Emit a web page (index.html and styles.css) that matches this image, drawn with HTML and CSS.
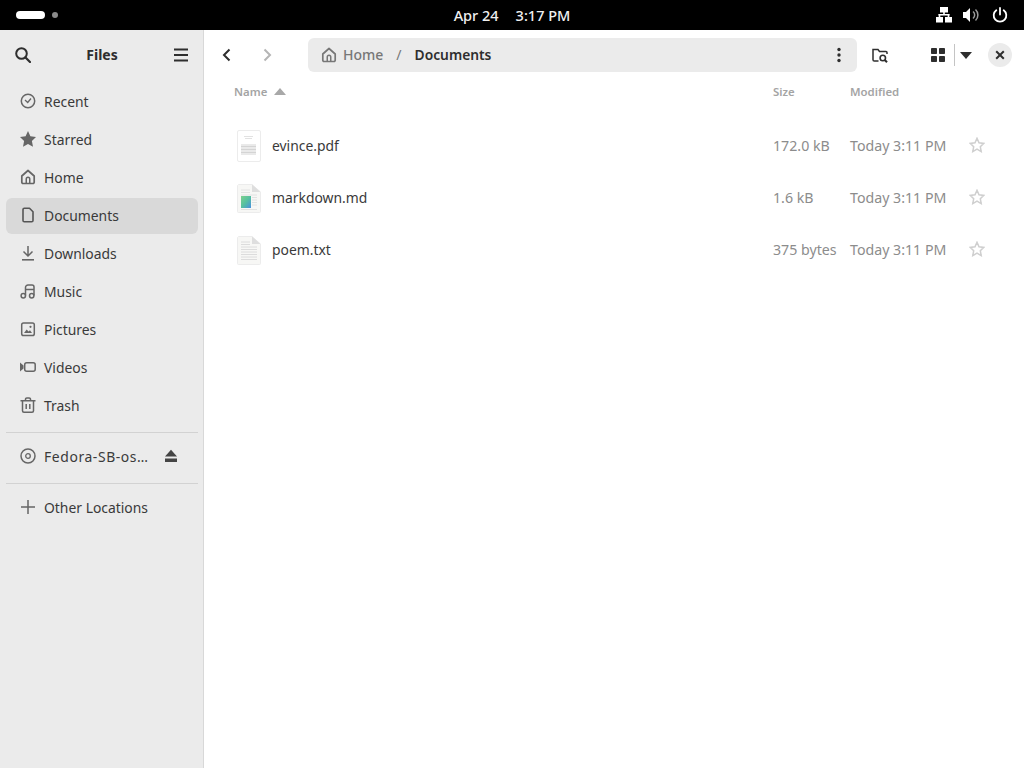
FILE: index.html
```html
<!DOCTYPE html>
<html lang="en">
<head>
<meta charset="utf-8">
<title>Files</title>
<link rel="stylesheet" href="styles.css">
</head>
<body>
<header class="topbar">
  <div class="activities"><span class="pill"></span><span class="dot"></span></div>
  <div class="clock"><span>Apr 24</span><span>3:17 PM</span></div>
  <div class="tray">
    <svg class="tray-icon" viewBox="0 0 16 16"><g fill="#fff"><rect x="4" y="0" width="8" height="5.500"/><rect x="0" y="10" width="7" height="5.500"/><rect x="9" y="10" width="7" height="5.500"/><rect x="7.200" y="5" width="1.600" height="3"/><rect x="2.500" y="7" width="11" height="1.500"/><rect x="2.700" y="7" width="1.600" height="3.500"/><rect x="11.700" y="7" width="1.600" height="3.500"/></g></svg>
    <svg class="tray-icon" viewBox="0 0 16 16"><path fill="#fff" d="M0 5h3l4-4v14l-4-4H0z"/><path fill="none" stroke="#9a9a9a" stroke-width="1.500" d="M10 4.500a4.500 4.500 0 0 1 0 7M12.500 2.500a7.500 7.500 0 0 1 0 11"/></svg>
    <svg class="tray-icon power" viewBox="0 0 16 16"><path fill="none" stroke="#fff" stroke-width="1.800" stroke-linecap="round" d="M8 1v6.500M4.300 3.300a6.300 6.300 0 1 0 7.400 0"/></svg>
  </div>
</header>
<div class="window">
  <aside class="sidebar">
    <div class="side-head">
      <svg class="icon dark" viewBox="0 0 16 16"><circle cx="6.500" cy="6.500" r="5.300" fill="none" stroke="#2e2e2e" stroke-width="2"/><path d="M10.500 10.500 15 15" stroke="#2e2e2e" stroke-width="2.200" stroke-linecap="round"/></svg>
      <span class="side-title">Files</span>
      <svg class="icon dark" viewBox="0 0 16 16"><path d="M1 2.500h14M1 8h14M1 13.500h14" stroke="#2e2e2e" stroke-width="2"/></svg>
    </div>
    <nav class="places">
      <a class="place"><svg class="icon" viewBox="0 0 16 16"><circle cx="8" cy="8" r="6.700" fill="none" stroke="#666" stroke-width="1.500"/><path d="M5 7 7.700 9.500 11 5.500" fill="none" stroke="#666" stroke-width="1.300"/></svg><span>Recent</span></a>
      <a class="place"><svg class="icon" viewBox="0 0 16 16"><path fill="#666" d="M8 0l2.400 5.300 5.600.7-4.100 3.900 1.100 5.800L8 12.900l-5 2.800 1.100-5.800L0 6l5.600-.7z"/></svg><span>Starred</span></a>
      <a class="place"><svg class="icon" viewBox="0 0 16 16"><path fill="none" stroke="#666" stroke-width="1.700" stroke-linejoin="round" d="M1.800 7 8 1.500 14.200 7v6.200a1.300 1.300 0 0 1-1.300 1.300H3.100a1.300 1.300 0 0 1-1.300-1.300z"/><path fill="#666" d="M5.500 14.500V10a2.500 2.500 0 0 1 5 0v4.500H9V10a1 1 0 0 0-2 0v4.500z"/></svg><span>Home</span></a>
      <a class="place selected"><svg class="icon" viewBox="0 0 16 16"><path fill="none" stroke="#555" stroke-width="1.600" stroke-linejoin="round" d="M3 2.500A1.300 1.300 0 0 1 4.300 1.200H9.500L13 4.700v8.800a1.300 1.300 0 0 1-1.300 1.300H4.300A1.300 1.300 0 0 1 3 13.500z"/></svg><span>Documents</span></a>
      <a class="place"><svg class="icon" viewBox="0 0 16 16"><path fill="none" stroke="#666" stroke-width="1.500" d="M8 1v9.500M3.500 6.500 8 11l4.500-4.500"/><path stroke="#666" stroke-width="1.600" d="M2 14.800h12"/></svg><span>Downloads</span></a>
      <a class="place"><svg class="icon" viewBox="0 0 16 16"><circle cx="3.300" cy="12.700" r="2.200" fill="none" stroke="#666" stroke-width="1.500"/><circle cx="11.700" cy="12.700" r="2.200" fill="none" stroke="#666" stroke-width="1.500"/><path fill="none" stroke="#666" stroke-width="1.500" d="M5.500 12.500V4.500a2.500 2.500 0 0 1 2.500-2.500h4a2 2 0 0 1 2 2v8.500M5.500 6.500H14"/></svg><span>Music</span></a>
      <a class="place"><svg class="icon" viewBox="0 0 16 16"><rect x="1.700" y="2" width="12.600" height="12.600" rx="1.800" fill="none" stroke="#666" stroke-width="1.500"/><path fill="#666" d="M4 12l2.700-3.500 1.800 2 1.500-1.300L12 12z"/><circle cx="10.500" cy="5.800" r="1.100" fill="#666"/></svg><span>Pictures</span></a>
      <a class="place"><svg class="icon" viewBox="0 0 16 16"><path fill="#666" d="M0 3.500l3.500 3v3l-3.500 3z"/><rect x="4.700" y="3.700" width="10.500" height="8.600" rx="2" fill="none" stroke="#666" stroke-width="1.500"/></svg><span>Videos</span></a>
      <a class="place"><svg class="icon" viewBox="0 0 16 16"><path fill="none" stroke="#666" stroke-width="1.500" d="M.5 3.700h15M5.500 3.500V2.300A1.300 1.300 0 0 1 6.800 1h2.400a1.300 1.300 0 0 1 1.300 1.300v1.200M2.500 3.700v10a1.500 1.500 0 0 0 1.500 1.500h8a1.500 1.500 0 0 0 1.500-1.500v-10M6.200 7v5M9.800 7v5"/></svg><span>Trash</span></a>
    </nav>
    <div class="rule"></div>
    <a class="place volume"><svg class="icon" viewBox="0 0 16 16"><circle cx="8" cy="8" r="7" fill="none" stroke="#666" stroke-width="1.500"/><circle cx="8" cy="8" r="2.300" fill="none" stroke="#666" stroke-width="1.300"/></svg><span class="grow">Fedora-SB-os…</span><svg class="eject" viewBox="0 0 14 14"><path fill="#444" d="M7 .8 13 7.500H1z"/><rect x="1" y="9.500" width="12" height="3.500" fill="#444"/></svg></a>
    <div class="rule"></div>
    <a class="place"><svg class="icon" viewBox="0 0 16 16"><path d="M8 1v14M1 8h14" stroke="#666" stroke-width="1.500"/></svg><span>Other Locations</span></a>
  </aside>
  <main class="content">
    <div class="toolbar">
      <div class="nav-btns">
        <svg class="icon" viewBox="0 0 16 16"><path d="M10.500 2.500 5 8l5.500 5.500" fill="none" stroke="#2e2e2e" stroke-width="2"/></svg>
        <svg class="icon" viewBox="0 0 16 16"><path d="M5.500 2.500 11 8l-5.500 5.500" fill="none" stroke="#b5b5b5" stroke-width="2"/></svg>
      </div>
      <div class="pathbar">
        <svg class="icon small" viewBox="0 0 16 16"><path fill="none" stroke="#777" stroke-width="1.700" stroke-linejoin="round" d="M1.800 7 8 1.500 14.200 7v6.200a1.300 1.300 0 0 1-1.300 1.300H3.100a1.300 1.300 0 0 1-1.300-1.300z"/><path fill="#777" d="M5.500 14.500V10a2.500 2.500 0 0 1 5 0v4.500H9V10a1 1 0 0 0-2 0v4.500z"/></svg>
        <span class="crumb">Home</span>
        <span class="slash">/</span>
        <span class="crumb-current">Documents</span>
        <svg class="kebab" viewBox="0 0 4 16"><circle cx="2" cy="2.500" r="1.700" fill="#2e2e2e"/><circle cx="2" cy="8" r="1.700" fill="#2e2e2e"/><circle cx="2" cy="13.500" r="1.700" fill="#2e2e2e"/></svg>
      </div>
      <svg class="icon folder-search" viewBox="0 0 16 16"><path fill="none" stroke="#2e2e2e" stroke-width="1.500" d="M6.500 14H2.300A1.300 1.300 0 0 1 1 12.700V2.500h5l1.500 2h6.500a1 1 0 0 1 1 1V7"/><circle cx="10.800" cy="11" r="2.700" fill="none" stroke="#2e2e2e" stroke-width="1.600"/><path d="M12.800 13 15 15.300" stroke="#2e2e2e" stroke-width="2"/></svg>
      <div class="view-btns">
        <svg class="grid-icon" viewBox="0 0 14 14"><rect width="6" height="6" rx=".8" fill="#2e2e2e"/><rect x="8" width="6" height="6" rx=".8" fill="#2e2e2e"/><rect y="8" width="6" height="6" rx=".8" fill="#2e2e2e"/><rect x="8" y="8" width="6" height="6" rx=".8" fill="#2e2e2e"/></svg>
        <span class="divider"></span>
        <span class="caret"></span>
      </div>
      <div class="close"><svg viewBox="0 0 10 10" class="close-x"><path d="M1.200 1.200l7.600 7.600M8.800 1.200 1.200 8.800" stroke="#2e2e2e" stroke-width="2"/></svg></div>
    </div>
    <div class="columns">
      <div class="col-name">Name <span class="sort"></span></div>
      <div class="col-size">Size</div>
      <div class="col-mod">Modified</div>
    </div>
    <div class="rows">
      <div class="row">
        <svg class="thumb" viewBox="0 0 28 36"><rect x="1.500" y="3.500" width="23" height="31" rx="1.500" fill="#fff" stroke="#ececec"/><path d="M8 9.500h9M9 11.500h7" stroke="#e2e2e2"/><path d="M5 18h15M5 19.500h15M5 21h15M5 22.500h15M5 24h15M5 25.500h15M5 27h15" stroke="#d4d4d4"/></svg>
        <span class="fname">evince.pdf</span><span class="fsize">172.0 kB</span><span class="fmod">Today 3:11 PM</span>
        <svg class="fav" viewBox="0 0 16 16"><path fill="none" stroke="#cfcfcf" stroke-width="1.500" d="M8 1.300l2 4.500 4.800.6-3.500 3.300.9 4.900L8 12.200l-4.200 2.400.9-4.900L1.200 6.400 6 5.800z"/></svg>
      </div>
      <div class="row">
        <svg class="thumb" viewBox="0 0 28 36"><defs><linearGradient id="g" x1="0" y1="0" x2="1" y2="1"><stop offset="0" stop-color="#7ed08c"/><stop offset=".5" stop-color="#55c0a0"/><stop offset="1" stop-color="#4a8ee0"/></linearGradient></defs><path d="M2.500 5.500H16L24.500 13v19.500a1 1 0 0 1-1 1H2.500a1 1 0 0 1-1-1V6.500z" fill="#f7f7f5" stroke="#ececec"/><path d="M16 5.500V13h8.500z" fill="#dedede"/><path d="M5 11h9M5 13.500h9M5 16h16M16 18.500h5M16 21h5M16 23.500h5M16 26h5M5 30.500h16" stroke="#e2e2e2"/><rect x="5" y="17" width="10" height="12" fill="url(#g)"/></svg>
        <span class="fname">markdown.md</span><span class="fsize">1.6 kB</span><span class="fmod">Today 3:11 PM</span>
        <svg class="fav" viewBox="0 0 16 16"><path fill="none" stroke="#cfcfcf" stroke-width="1.500" d="M8 1.300l2 4.500 4.800.6-3.500 3.300.9 4.900L8 12.200l-4.200 2.400.9-4.900L1.200 6.400 6 5.800z"/></svg>
      </div>
      <div class="row">
        <svg class="thumb" viewBox="0 0 28 36"><path d="M2.500 5.500H16L24.500 13v19.500a1 1 0 0 1-1 1H2.500a1 1 0 0 1-1-1V6.500z" fill="#f7f7f5" stroke="#ececec"/><path d="M16 5.500V13h8.500z" fill="#dedede"/><path d="M5 11h9M5 13.500h9M5 16h16M5 18.500h16M5 21h16M5 23.500h16M5 26h16M5 28.500h16" stroke="#dcdcdc"/></svg>
        <span class="fname">poem.txt</span><span class="fsize">375 bytes</span><span class="fmod">Today 3:11 PM</span>
        <svg class="fav" viewBox="0 0 16 16"><path fill="none" stroke="#cfcfcf" stroke-width="1.500" d="M8 1.300l2 4.500 4.800.6-3.500 3.300.9 4.900L8 12.200l-4.200 2.400.9-4.900L1.200 6.400 6 5.800z"/></svg>
      </div>
    </div>
  </main>
</div>
</body>
</html>
```
FILE: styles.css
```css
* { box-sizing: border-box; }
html, body { margin: 0; height: 100%; overflow: hidden; }
body { font-family: "Noto Sans", "Open Sans", sans-serif; font-size: 13.9px; color: #2e2e2e; background: #fff; display: flex; flex-direction: column; }

.topbar { height: 30px; flex: none; background: #000; color: #f0f0f0; display: grid; grid-template-columns: 1fr auto 1fr; align-items: center; padding: 0 16px; }
.activities { display: flex; align-items: center; gap: 7px; }
.pill { width: 29px; height: 8px; border-radius: 4px; background: #fff; }
.dot { width: 6px; height: 6px; border-radius: 50%; background: #8a8a8a; }
.clock { display: flex; gap: 17px; font-size: 14.5px; font-weight: 500; padding-bottom: 1px; }
.tray { display: flex; justify-content: flex-end; gap: 11px; }
.tray-icon { width: 16px; height: 16px; display: block; }
.power { margin-left: 2px; }

.window { flex: 1; display: flex; min-height: 0; }
.sidebar { width: 204px; flex: none; background: #ebebeb; border-right: 1px solid #d8d8d8; display: flex; flex-direction: column; padding: 0 5px 0 6px; }
.side-head { height: 50px; flex: none; display: flex; align-items: center; justify-content: space-between; padding: 0 9px; }
.side-title { font-weight: 700; font-size: 14px; padding-bottom: 2px; }
.icon { width: 16px; height: 16px; flex: none; display: block; }
.places { display: flex; flex-direction: column; gap: 2px; padding-top: 4px; }
.place { height: 36px; display: flex; align-items: center; gap: 8px; padding: 0 14px 2px; border-radius: 6px; color: #3a3a3a; }
.selected { background: #d9d9d9; }
.volume { padding-right: 20px; }
.grow { flex: 1; white-space: nowrap; letter-spacing: .6px; }
.eject { width: 14px; height: 14px; display: block; }
.rule { height: 1px; flex: none; background: #d2d2d2; margin-top: 8px; margin-bottom: 6px; }

.content { flex: 1; min-width: 0; display: flex; flex-direction: column; }
.toolbar { height: 50px; flex: none; display: flex; align-items: center; padding-left: 15px; }
.nav-btns { display: flex; gap: 24px; width: 89px; flex: none; }
.pathbar { width: 549px; height: 34px; flex: none; background: #ebebeb; border-radius: 6px; display: flex; align-items: center; padding: 0 16px 0 13px; font-size: 14px; }
.small { margin-right: 6px; }
.crumb { color: #777; font-weight: 500; padding-bottom: 2px; }
.slash { color: #777; margin: 0 13px 0 13px; padding-bottom: 2px; }
.crumb-current { font-weight: 600; flex: 1; color: #2e2e2e; font-size: 13.8px; padding-bottom: 2px; }
.kebab { width: 4px; height: 16px; display: block; }
.folder-search { margin-left: 15px; }
.view-btns { display: flex; align-items: center; margin-left: 43px; }
.grid-icon { width: 14px; height: 14px; display: block; }
.divider { width: 1px; height: 22px; background: #c4c4c4; margin: 0 5px 0 9px; }
.caret { width: 0; height: 0; border-left: 6.500px solid transparent; border-right: 6.500px solid transparent; border-top: 7px solid #2e2e2e; }
.close { width: 24px; height: 24px; border-radius: 50%; background: #ebebeb; display: flex; align-items: center; justify-content: center; margin-left: 16px; }
.close-x { width: 10px; height: 10px; display: block; }

.columns { display: flex; height: 24px; align-items: center; padding: 0 0 1px 30px; font-size: 11.4px; font-weight: 600; color: #a4a4a4; }
.col-name { width: 539px; display: flex; align-items: center; gap: 7px; }
.sort { width: 0; height: 0; border-left: 6px solid transparent; border-right: 6px solid transparent; border-bottom: 7px solid #a8a8a8; }
.col-size { width: 77px; }
.rows { padding-top: 15px; display: flex; flex-direction: column; }
.row { height: 52px; display: flex; align-items: center; padding-left: 32px; }
.thumb { width: 28px; height: 36px; flex: none; display: block; }
.fname { width: 509px; padding-left: 8px; color: #3a3a3a; }
.fsize { width: 77px; color: #8c8c8c; font-size: 14.2px; }
.fmod { width: 119px; color: #8c8c8c; white-space: nowrap; font-size: 14.2px; }
.fav { width: 16px; height: 16px; display: block; }
```
